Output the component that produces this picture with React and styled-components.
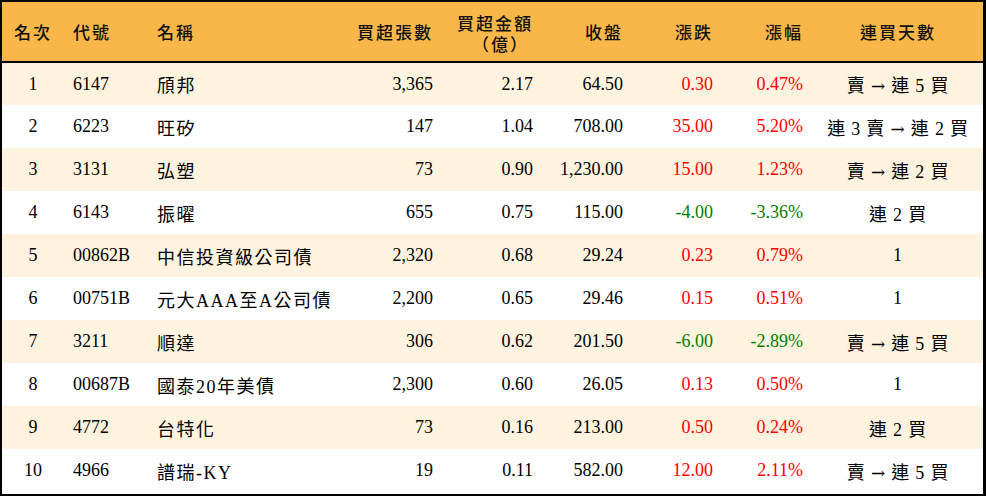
import React from "react";
import styled, { createGlobalStyle } from "styled-components";

const GlobalStyle = createGlobalStyle`
  html, body {
    margin: 0;
    padding: 0;
    background: #ffffff;
  }
  body {
    font-family: "Liberation Serif", "Noto Sans CJK TC", serif;
  }
`;

const columns = [
  { key: "rank", title: "名次", width: 62, align: "center" },
  { key: "code", title: "代號", width: 84, align: "left" },
  { key: "name", title: "名稱", width: 194, align: "left" },
  { key: "lots", title: "買超張數", width: 100, align: "right" },
  { key: "amount", title: "買超金額", sub: "（億）", width: 100, align: "right" },
  { key: "close", title: "收盤", width: 90, align: "right" },
  { key: "change", title: "漲跌", width: 90, align: "right" },
  { key: "pct", title: "漲幅", width: 90, align: "right" },
  { key: "days", title: "連買天數", width: 172, align: "center" },
];

const rows = [
  ["1", "6147", "頎邦", "3,365", "2.17", "64.50", "0.30", "0.47%", "賣 → 連 5 買"],
  ["2", "6223", "旺矽", "147", "1.04", "708.00", "35.00", "5.20%", "連 3 賣 → 連 2 買"],
  ["3", "3131", "弘塑", "73", "0.90", "1,230.00", "15.00", "1.23%", "賣 → 連 2 買"],
  ["4", "6143", "振曜", "655", "0.75", "115.00", "-4.00", "-3.36%", "連 2 買"],
  ["5", "00862B", "中信投資級公司債", "2,320", "0.68", "29.24", "0.23", "0.79%", "1"],
  ["6", "00751B", "元大AAA至A公司債", "2,200", "0.65", "29.46", "0.15", "0.51%", "1"],
  ["7", "3211", "順達", "306", "0.62", "201.50", "-6.00", "-2.89%", "賣 → 連 5 買"],
  ["8", "00687B", "國泰20年美債", "2,300", "0.60", "26.05", "0.13", "0.50%", "1"],
  ["9", "4772", "台特化", "73", "0.16", "213.00", "0.50", "0.24%", "連 2 買"],
  ["10", "4966", "譜瑞-KY", "19", "0.11", "582.00", "12.00", "2.11%", "賣 → 連 5 買"],
];

function toneOf(key, value) {
  if (key !== "change" && key !== "pct") return "plain";
  return value.startsWith("-") ? "down" : "up";
}

const toneColor = {
  plain: "#000000",
  up: "#ff0000",
  down: "#008000",
};

// the arrow comes from a font whose glyph is long, like the reference
function withArrow(text) {
  const parts = text.split("→");
  if (parts.length === 1) return text;
  return (
    <>
      {parts[0]}
      <Arrow>→</Arrow>
      {parts[1]}
    </>
  );
}

export default function App() {
  return (
    <>
      <GlobalStyle />
      <Frame>
        <Table>
          <colgroup>
            {columns.map((c) => (
              <col key={c.key} style={{ width: c.width }} />
            ))}
          </colgroup>
          <thead>
            <tr>
              {columns.map((c) => (
                <HeadCell key={c.key} $align={c.align}>
                  {c.sub ? (
                    <>
                      <HeadLine>{c.title}</HeadLine>
                      <Sub>{c.sub}</Sub>
                    </>
                  ) : (
                    c.title
                  )}
                </HeadCell>
              ))}
            </tr>
          </thead>
          <tbody>
            {rows.map((r, i) => (
              <Row key={r[0]} $striped={i % 2 === 0}>
                {columns.map((c, j) => (
                  <Cell key={c.key} $align={c.align} $tone={toneOf(c.key, r[j])} $kind={c.key}>
                    {c.key === "days" ? withArrow(r[j]) : r[j]}
                  </Cell>
                ))}
              </Row>
            ))}
          </tbody>
        </Table>
      </Frame>
    </>
  );
}

const Frame = styled.div`
  width: 986px;
  height: 496px;
  box-sizing: border-box;
  border: 2px solid #000;
  border-right-width: 3px;
  background: #fff;
  overflow: hidden;
`;

const Table = styled.table`
  width: 981px;
  border-collapse: collapse;
  table-layout: fixed;
`;

const HeadCell = styled.th`
  height: 60px;
  padding: 0 9px;
  box-sizing: border-box;
  background: #f9b74a;
  border-bottom: 2px solid #000;
  text-align: ${(p) => p.$align};
  vertical-align: middle;
  font-family: "Noto Sans CJK TC", serif;
  font-size: 17px;
  font-weight: 500;
  letter-spacing: 2px;
  line-height: 22px;
  color: #111;
  white-space: nowrap;
`;

const HeadLine = styled.div`
  height: 22px;
  margin-top: 2px;
`;

const Sub = styled.div`
  height: 20px;
  letter-spacing: 2px;
  padding-right: 4px;
  line-height: 20px;
`;

const Row = styled.tr`
  height: 43px;
  background: ${(p) => (p.$striped ? "#fef3df" : "#ffffff")};
`;

const spacingFor = { name: "1.5px", days: "0.8px" };

const Cell = styled.td`
  padding: 0 9px;
  box-sizing: border-box;
  text-align: ${(p) => p.$align};
  vertical-align: middle;
  font-family: "Liberation Serif", "Noto Sans CJK TC", serif;
  font-size: 18px;
  letter-spacing: ${(p) => spacingFor[p.$kind] || "0"};
  color: ${(p) => toneColor[p.$tone]};
  white-space: nowrap;
  overflow: hidden;
`;

const Arrow = styled.span`
  font-family: "DejaVu Serif", serif;
  font-size: 17px;
`;
